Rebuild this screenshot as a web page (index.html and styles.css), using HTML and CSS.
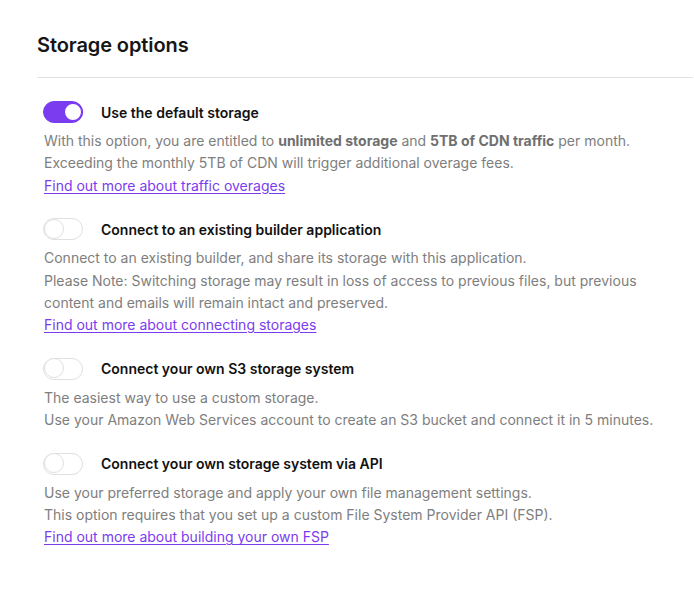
FILE: index.html
```html
<!DOCTYPE html>
<html>
<head>
<meta charset="utf-8">
<link rel="stylesheet" href="styles.css">
</head>
<body>
<div class="panel">
  <h2 class="heading">Storage options</h2>
  <div class="divider"></div>
  <div class="options">
    <div class="option">
      <div class="option-head">
        <span class="toggle on"><span class="knob"></span></span>
        <span class="title">Use the default storage</span>
      </div>
      <div class="desc">
        <p>With this option, you are entitled to <b>unlimited storage</b> and <b>5TB of CDN traffic</b> per month.</p>
        <p>Exceeding the monthly 5TB of CDN will trigger additional overage fees.</p>
        <p><a href="#">Find out more about traffic overages</a></p>
      </div>
    </div>
    <div class="option">
      <div class="option-head">
        <span class="toggle"><span class="knob"></span></span>
        <span class="title">Connect to an existing builder application</span>
      </div>
      <div class="desc">
        <p>Connect to an existing builder, and share its storage with this application.</p>
        <p>Please Note: Switching storage may result in loss of access to previous files, but previous content and emails will remain intact and preserved.</p>
        <p><a href="#">Find out more about connecting storages</a></p>
      </div>
    </div>
    <div class="option">
      <div class="option-head">
        <span class="toggle"><span class="knob"></span></span>
        <span class="title">Connect your own S3 storage system</span>
      </div>
      <div class="desc">
        <p>The easiest way to use a custom storage.</p>
        <p>Use your Amazon Web Services account to create an S3 bucket and connect it in 5 minutes.</p>
      </div>
    </div>
    <div class="option">
      <div class="option-head">
        <span class="toggle"><span class="knob"></span></span>
        <span class="title">Connect your own storage system via API</span>
      </div>
      <div class="desc">
        <p>Use your preferred storage and apply your own file management settings.</p>
        <p>This option requires that you set up a custom File System Provider API (FSP).</p>
        <p><a href="#">Find out more about building your own FSP</a></p>
      </div>
    </div>
  </div>
</div>
</body>
</html>
```
FILE: styles.css
```css
* { box-sizing: border-box; }
html, body { margin: 0; padding: 0; background: #fff; }
body {
  font-family: Inter, "Noto Sans", sans-serif;
  color: #111;
  -webkit-font-smoothing: antialiased;
}
.panel {
  padding: 32px 1px 0 37px;
}
.heading {
  margin: 0;
  font-size: 20px;
  line-height: 26px;
  font-weight: 600;
  color: #161616;
  letter-spacing: -0.1px;
}
.divider {
  margin-top: 19px;
  height: 1px;
  background: #e2e2e2;
}
.options {
  padding: 23px 0 0 6px;
  display: flex;
  flex-direction: column;
  gap: 21px;
}
.option-head {
  display: flex;
  align-items: center;
  gap: 18px;
  height: 22px;
}
.toggle {
  position: relative;
  width: 40px;
  height: 22px;
  border-radius: 11px;
  border: 1.5px solid #e0e0e0;
  background: #fff;
  flex: none;
}
.toggle .knob {
  position: absolute;
  top: -0.5px;
  left: -0.5px;
  width: 20px;
  height: 20px;
  border-radius: 50%;
  border: 1.5px solid #e0e0e0;
  background: #fff;
}
.toggle.on {
  background: #7b3cf0;
  border-color: #7b3cf0;
}
.toggle.on .knob {
  left: auto;
  right: -0.5px;
  border: 2px solid #7b3cf0;
}
.title {
  font-size: 14px;
  font-weight: 600;
  color: #111;
}
.desc {
  margin-top: 7px;
  padding-left: 1px;
  max-width: 622px;
  font-size: 14px;
  line-height: 22.4px;
  color: #7e7e7e;
}
.desc p { margin: 0; }
.desc b { font-weight: 700; color: #6f6f6f; }
.desc a {
  color: #7b3cf0;
  text-decoration: underline;
  text-underline-offset: 2px;
}
```
